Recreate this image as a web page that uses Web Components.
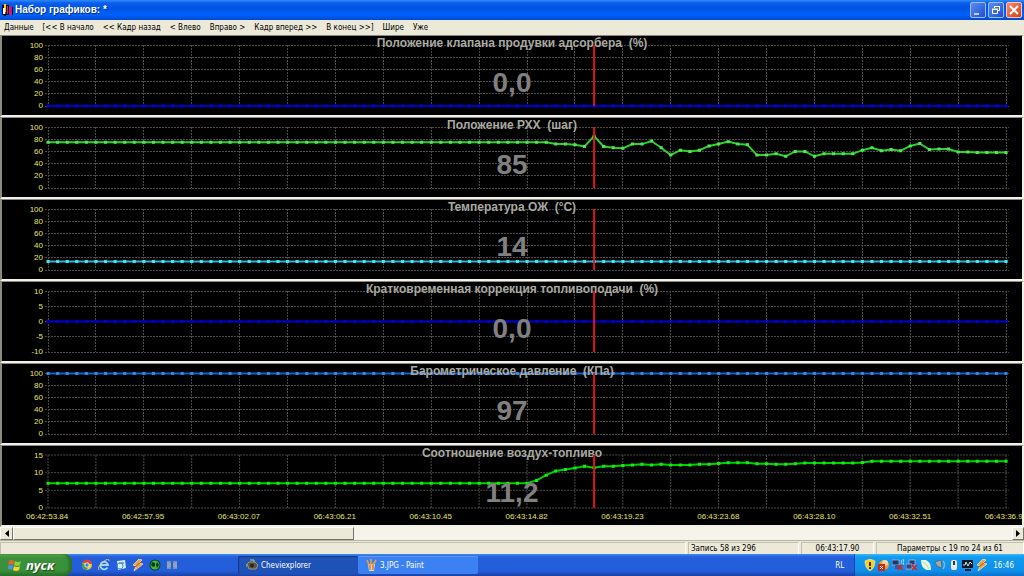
<!DOCTYPE html>
<html lang="ru">
<head>
<meta charset="utf-8">
<title>Набор графиков: *</title>
<style>
  body { margin: 0; background: #ece9d8; font-family: "DejaVu Sans Condensed", "DejaVu Sans", sans-serif; font-size: 8px; }
</style>
</head>
<body>
<graph-app></graph-app>
<script>
const html = (s, ...v) => s.reduce((a, b, i) => a + b + (i < v.length ? (Array.isArray(v[i]) ? v[i].join('') : v[i]) : ''), '');

class BaseElement extends HTMLElement {
  connectedCallback() {
    if (this.shadowRoot) return;
    this.attachShadow({ mode: 'open' }).innerHTML = this.render();
  }
}

class TitleBar extends BaseElement {
  render() {
    return html`<style>
      :host { display: flex; align-items: center; height: 20px; padding: 0 2px; box-sizing: border-box; gap: 2px;
        background: linear-gradient(#2f8bff 0, #0a5eea 3px, #0054e3 8px, #0062fb 15px, #0047d0 20px); }
      h1 { flex: 1; margin: 0; font: bold 10px/16px "Liberation Sans", Arial, sans-serif; color: #fff; text-shadow: 1px 1px 0 #0a2f8c; white-space: nowrap; }
      svg { display: block; }
      button { width: 16px; height: 16px; padding: 0; border: 1px solid #9dbcf5; border-radius: 2px; background: linear-gradient(135deg, #5b8df2, #1f4fd0); }
      button.close { background: linear-gradient(135deg, #f09070, #d43c12); border-color: #f4c4b4; }
    </style>
    <svg width="11" height="12" viewBox="0 0 11 12"><path d="M0 1h2v10H0z" fill="#111"/><path d="M2 0h2v8H2z" fill="#f5d020"/><path d="M1 4h2v6H1z" fill="#fff"/><path d="M4 1h3v10H4z" fill="#201010"/><path d="M5 2h1v8H5z" fill="#e03030"/><path d="M7 2h3v9H7z" fill="#c01890"/><path d="M10 3h1v8h-1zM2 10h2v2H2z" fill="#111"/></svg>
    <h1>Набор графиков: *</h1>
    <button aria-label="Свернуть"><svg width="14" height="14"><path d="M3 10h5v2H3z" fill="#b8d0ff"/></svg></button>
    <button aria-label="Восстановить"><svg width="14" height="14" fill="none" stroke="#fff"><path d="M5.500 5V3.500h5v4H9M5 3.500h6"/><path d="M3.500 6.500h5v4h-5zM3 6h6"/></svg></button>
    <button class="close" aria-label="Закрыть"><svg width="14" height="14"><path d="M3 3l8 8M11 3l-8 8" stroke="#fff" stroke-width="2"/></svg></button>`;
  }
}

class MenuBar extends BaseElement {
  render() {
    const items = ['Данные', '[&lt;&lt; В начало', '&lt;&lt; Кадр назад', '&lt; Влево', 'Вправо &gt;', 'Кадр вперед &gt;&gt;', 'В конец &gt;&gt;]', 'Шире', 'Уже'];
    return html`<style>
      :host { display: flex; align-items: center; gap: 9px; height: 15px; padding: 0 4px; background: #ece9d8; }
      button { border: 0; padding: 0; background: none; font: inherit; line-height: 14px; color: #000; white-space: nowrap; }
    </style>${items.map(t => `<button>${t}</button>`)}`;
  }
}

class ChartPanel extends BaseElement {
  render() {
    const a = n => this.getAttribute(n);
    const labels = a('ticks').split(' ');
    const max = +labels[0], min = +labels[labels.length - 1];
    const pts = [];
    for (const part of a('data').split(' ')) {
      const [v, n] = part.split('*');
      for (let i = 0; i < (+n || 1); i++) pts.push(+v);
    }
    const xy = pts.map((v, i) => [i, ((max - v) / (max - min) * 100).toFixed(2)]);
    const cols = Array.from({ length: 21 }, (_, i) => `M${i * 5} 0V100`);
    const rows = labels.map((_, i) => `M-0.3 ${i * 100 / (labels.length - 1)}H100.3`);
    const times = a('times') ? a('times').split(' ') : null;
    return html`<style>
      :host { display: grid; grid-template-columns: 46px minmax(0, 1fr) 16px; grid-template-rows: 9px minmax(0, 1fr) ${times ? 17 : 9}px;
        background: #000; border-style: solid; border-width: 1px 2px 2px 2px; border-color: #8c8a80 #f4f2e8 #f4f2e8 #8c8a80; overflow: hidden; }
      .y { grid-area: 2 / 1; display: flex; flex-direction: column; justify-content: space-between; margin: -5px 5px -5px 0; text-align: right;
        font: 8px/11px "Liberation Sans", Arial, sans-serif; color: #e6e664; }
      svg { grid-area: 2 / 2; width: 100%; height: 0; min-height: 100%; overflow: visible; display: block; }
      path { fill: none; vector-effect: non-scaling-stroke; }
      .grid { stroke: #4a4a4a; stroke-dasharray: 2 1; shape-rendering: crispEdges; }
      .text { grid-area: 1 / 1 / 4 / 4; text-align: center; font-family: "Liberation Sans", Arial, sans-serif; font-weight: bold; }
      h2 { margin: 0; font-size: 12px; line-height: 14px; color: #a9a9a0; white-space: pre; }
      output { display: block; margin-top: 16px; font-size: 28px; line-height: 34px; color: #808080; }
      .line { stroke: ${a('color')}; stroke-width: 2; }
      .dots { stroke: ${a('dot') || a('color')}; stroke-width: 3; stroke-linecap: square; }
      .cursor { stroke: #dc1414; stroke-width: 2; }
      .x { grid-area: 3 / 2; display: flex; justify-content: space-between; margin: 4px -21px 0 -22px; font: 8px/10px "Liberation Sans", sans-serif; color: #e6e664; }
      .x span { flex: 0 0 42px; white-space: nowrap; }
    </style>
    <div class="y">${labels.map(l => `<span>${l}</span>`)}</div>
    <svg viewBox="0 0 100 100" preserveAspectRatio="none" role="img">
      <path class="grid" d="${cols}${rows}"/>
      <path class="line" d="M${xy.map(p => p.join(' ')).join('L')}"/>
      <path class="dots" d="${xy.map(p => `M${p.join(' ')}h.01`)}"/>
    </svg>
    <div class="text"><h2><slot></slot></h2><output>${a('value')}</output></div>
    <svg viewBox="0 0 100 100" preserveAspectRatio="none" aria-hidden="true"><path class="cursor" d="M57 0V100"/></svg>
    ${times ? `<div class="x">${times.map(t => `<span>${t}</span>`).join('')}</div>` : ''}`;
  }
}

class ScrollStrip extends BaseElement {
  render() {
    return html`<style>
      :host { display: grid; grid-template-columns: 13px 341fr 658fr 12px; height: 13px; background: #f4f2e8; }
      button, .thumb { box-sizing: border-box; padding: 0; background: #ece9d8; border: 1px solid; border-color: #fff #77756a #77756a #fff; }
      button { display: flex; align-items: center; justify-content: center; }
      .track { background: #f5f3ea; }
    </style>
    <button aria-label="Назад"><svg width="4" height="7"><path d="M4 0v7L0 3.500z"/></svg></button>
    <div class="thumb"></div><div class="track"></div>
    <button aria-label="Вперед"><svg width="4" height="7"><path d="M0 0v7l4-3.500z"/></svg></button>`;
  }
}

class StatusBar extends BaseElement {
  render() {
    return html`<style>
      :host { display: grid; grid-template-columns: minmax(0, 1fr) 111px 73px 148px; gap: 2px; height: 14px; padding-top: 1px; box-sizing: border-box; background: #ece9d8; border-top: 1px solid #b5b2a2; }
      span { border-left: 1px solid #c4c0b0; border-right: 1px solid #fff; border-top: 1px solid #c4c0b0; padding: 0 2px; line-height: 11px; white-space: nowrap; text-align: center; }
      .rec { text-align: left; }
    </style><span></span><span class="rec">Запись 58 из 296</span><span>06:43:17.90</span><span>Параметры с 19 по 24 из 61</span>`;
  }
}

const bolt = '<svg width="12" height="12" viewBox="0 0 12 12"><path d="M7 0L1 6l3 1-2 5 9-7-4-1 3-3z" fill="#f0a040" stroke="#f8e0b0" stroke-width=".8"/><path d="M3 8l6-5" stroke="#a05818"/></svg>';
class TaskBar extends BaseElement {
  render() {
    return html`<style>
      :host { display: flex; align-items: stretch; height: 22px; color: #fff; overflow: hidden;
        background: linear-gradient(#3f8cf3 0, #245edb 3px, #245edb 17px, #1941a5 22px); }
      button { font: inherit; color: inherit; border: 0; padding: 0; background: none; display: flex; align-items: center; }
      svg { display: block; flex: none; }
      .start { width: 72px; padding-left: 8px; gap: 4px; border-radius: 0 8px 8px 0; font: italic bold 13px/18px "Open Sans", sans-serif; text-shadow: 1px 1px 1px #1a4a1a;
        background: linear-gradient(#5eac56 0, #3c8e3c 4px, #389238 16px, #2a6e2a 22px); box-shadow: inset -3px 0 3px #2a6e2a; }
      .quick { display: flex; align-items: center; gap: 5px; margin-left: 9px; width: 157px; }
      .task { width: 120px; margin: 2px 0; padding-left: 8px; gap: 3px; border-radius: 2px; background: #3c81f3; box-shadow: inset 0 1px 0 #5a9aff; white-space: nowrap; }
      .task.on { background: #1e52b7; box-shadow: inset 1px 1px 1px #153a88; }
      .lang { margin-left: auto; padding: 0 10px; }
      .tray { display: flex; align-items: center; gap: 2px; padding: 0 10px 0 9px; border-left: 1px solid #1042af; background: linear-gradient(#3cb8f5 0, #129bee 3px, #0f8eea 17px, #0d70c8 22px); }
      time { margin-left: 3px; }
    </style>
    <button class="start"><svg width="14" height="14" viewBox="0 0 14 14"><path d="M1 3q3-2 5 0L5 7Q3 5 0 7z" fill="#f06030"/><path d="M7 3q3 2 6 0l-1 4q-3 2-6 0z" fill="#8cd040"/><path d="M0 8q3-2 5 0l-1 4q-2-2-5 0z" fill="#5090f0"/><path d="M6 8q3 2 6 0l-1 4q-3 2-6 0z" fill="#f8d030"/></svg>пуск</button>
    <div class="quick">
      <button aria-label="Chrome"><svg width="12" height="12" viewBox="0 0 12 12"><circle cx="6" cy="6" r="5" fill="#f0c830"/><path d="M1.500 3.500A5 5 0 0 1 11 5H6z" fill="#e04030"/><path d="M1.500 3.500A5 5 0 0 0 6 11l1-4-3-1z" fill="#40a048"/><circle cx="6" cy="6" r="2.200" fill="#4080e0" stroke="#fff" stroke-width=".8"/></svg></button>
      <button aria-label="Internet Explorer"><svg width="12" height="12" viewBox="0 0 12 12" fill="none"><path d="M9.500 8.500A3.800 3.800 0 1 1 10 6H3" stroke="#9cd8ff" stroke-width="1.800"/><path d="M1 11Q-1 8 5 3t6-1" stroke="#f0c850"/></svg></button>
      <button aria-label="Outlook Express"><svg width="12" height="12" viewBox="0 0 12 12"><path d="M2 2l8-1 1 8-8 2z" fill="#d8ecf8"/><path d="M4 3h5v2H4z" fill="#70a8d8"/><circle cx="5" cy="7" r="3" fill="none" stroke="#4890c8"/></svg></button>
      <button aria-label="Winamp">${bolt}</button>
      <button aria-label="Загрузки"><svg width="12" height="12" viewBox="0 0 12 12"><circle cx="6" cy="6" r="5.500" fill="#103818"/><circle cx="6" cy="6" r="4.500" fill="#38b848"/><path d="M3 3l3 1v3L4 8 2 6zM8 3l2 3-2 3-1-3z" fill="#0c3c14"/></svg></button>
      <button aria-label="Связь"><svg width="12" height="12" viewBox="0 0 12 12"><path d="M1 2h4v8H1zM7 2h4v8H7z" fill="#7890b0"/><path d="M2 3v6M4 4v4M8 4v4M10 3v6" stroke="#a8b4c4" fill="none"/></svg></button>
    </div>
    <button class="task on"><svg width="12" height="12" viewBox="0 0 12 12"><path d="M1 5l2-2h6l3 3-2 4H3z" fill="#585848" stroke="#b0a870" stroke-width=".8"/><path d="M4 1h4v2M0 5v3" stroke="#c8c090" fill="none"/><circle cx="6" cy="6.500" r="2" fill="#282820"/></svg>Cheviexplorer</button>
    <button class="task"><svg width="11" height="12" viewBox="0 0 11 12"><path d="M2 5h7l-1 7H3z" fill="#e8d8a0"/><path d="M3 6L1 1M5 6V0M7 6l3-5" stroke="#f0a030" stroke-width="1.500"/><path d="M4 6v5M7 6v5" stroke="#c05030"/></svg>3.JPG - Paint</button>
    <button class="lang">RL</button>
    <div class="tray">
      <svg width="12" height="12" viewBox="0 0 12 12"><path d="M6 0l5 2q0 7-5 10Q1 9 1 2z" fill="#f8d020" stroke="#fff4b0" stroke-width=".6"/><path d="M5 3h2v4H5zM5 8h2v2H5z" fill="#403008"/></svg>
      <svg width="12" height="12" viewBox="0 0 12 12"><circle cx="6" cy="6" r="5" fill="#f09828"/><circle cx="7" cy="4" r="3" fill="#f8d8a0"/><path d="M0 5h7v7H0z" fill="#d02818"/><path d="M2 7l3 3M5 7l-3 3" stroke="#fff"/></svg>
      <svg width="12" height="12" viewBox="0 0 12 12"><path d="M0 1h7v5H0z" fill="#203870" stroke="#a8b8d8" stroke-width=".8"/><path d="M3 6h6v4H3z" fill="#405890"/><path d="M9 1q2 2 0 4M11 0q2 3 0 6" stroke="#d0e0f0" fill="none" stroke-width=".8"/><path d="M6 6l5 5M11 6l-5 5" stroke="#e02020" stroke-width="1.500"/></svg>
      <svg width="12" height="12" viewBox="0 0 12 12"><path d="M3 1h6v5H3z" fill="#283c78" stroke="#a8b8d8" stroke-width=".8"/><path d="M0 5h6v5H0z" fill="#304880" stroke="#a8b8d8" stroke-width=".8"/><path d="M6 6l5 5M11 6l-5 5" stroke="#e02020" stroke-width="1.500"/></svg>
      <svg width="12" height="12" viewBox="0 0 12 12"><path d="M1 1h5q5 2 5 10H7Q1 9 1 1z" fill="#e8f8e0"/><path d="M3 3q4 2 6 7" stroke="#a8e0a8" fill="none"/></svg>
      <svg width="12" height="12" viewBox="0 0 12 12"><path d="M1 3l6-2 1 8-5-2z" fill="#a8a8a0" stroke="#405070" stroke-width=".6"/><path d="M9 2q3 3 0 8" stroke="#78b8f8" fill="none" stroke-width="1.500"/></svg>
      <svg width="12" height="12" viewBox="0 0 12 12"><rect x="3" y="1" width="6" height="10" rx="2" fill="#e8e8e8"/><path d="M5 2h2v4H5z" fill="#303840"/></svg>
      <svg width="12" height="12" viewBox="0 0 12 12"><path d="M0 1h11v8H0zM3 10h6v2H3z" fill="#101828"/><path d="M1 6h2l1-3 2 4 2-4 2 2" stroke="#c8e0f0" fill="none"/></svg>
      ${bolt}
      <time>16:46</time>
    </div>`;
  }
}

class GraphApp extends BaseElement {
  render() {
    const pct = '100 80 60 40 20 0';
    return html`<style>
      :host { display: flex; flex-direction: column; min-height: 100vh; }
      main { flex: 1; display: grid; grid-template-rows: repeat(6, minmax(82px, 1fr)); }
      title-bar, menu-bar, scroll-strip, status-bar, task-bar { flex: none; }
    </style>
    <title-bar></title-bar>
    <menu-bar></menu-bar>
    <main>
      <chart-panel ticks="${pct}" value="0,0" color="#0000c0" dot="#0000e0" data="0*101">Положение клапана продувки адсорбера  (%)</chart-panel>
      <chart-panel ticks="${pct}" value="85" color="#30d030" dot="#50e850" data="75*53 72*2 71 68 85 68 66 65 72*2 77 66 54 62 60 62 69 72 76 72 71 54*2 56 52 60*2 52 56*4 62 66 61 63 61 69 73 63 64*2 59*2 58*4">Положение РХХ  (шаг)</chart-panel>
      <chart-panel ticks="${pct}" value="14" color="#40a8c8" dot="#30f0f0" data="14*101">Температура ОЖ  (°С)</chart-panel>
      <chart-panel ticks="10 5 0 -5 -10" value="0,0" color="#0000c8" data="0*101">Кратковременная коррекция топливоподачи  (%)</chart-panel>
      <chart-panel ticks="${pct}" value="97" color="#1860c0" dot="#3088e8" data="99*101">Барометрическое давление  (КПа)</chart-panel>
      <chart-panel ticks="15 10 5 0" value="11,2" color="#00d000" dot="#10f010" data="7*51 7.8 9.3 10.5 10.9 11.3 11.8 11.4 11.8*2 12 12.2 12.4 12.2 12.4 12.2*3 12.4*2 12.6 12.8*3 12.5*2 12.4*2 12.5 12.7*6 12.9 13.2*15" times="06:42:53.84 06:42:57.95 06:43:02.07 06:43:06.21 06:43:10.45 06:43:14.82 06:43:19.23 06:43:23.68 06:43:28.10 06:43:32.51 06:43:36.9">Соотношение воздух-топливо</chart-panel>
    </main>
    <scroll-strip></scroll-strip>
    <status-bar></status-bar>
    <task-bar></task-bar>`;
  }
}

customElements.define('title-bar', TitleBar);
customElements.define('menu-bar', MenuBar);
customElements.define('chart-panel', ChartPanel);
customElements.define('scroll-strip', ScrollStrip);
customElements.define('status-bar', StatusBar);
customElements.define('task-bar', TaskBar);
customElements.define('graph-app', GraphApp);
</script>
</body>
</html>
